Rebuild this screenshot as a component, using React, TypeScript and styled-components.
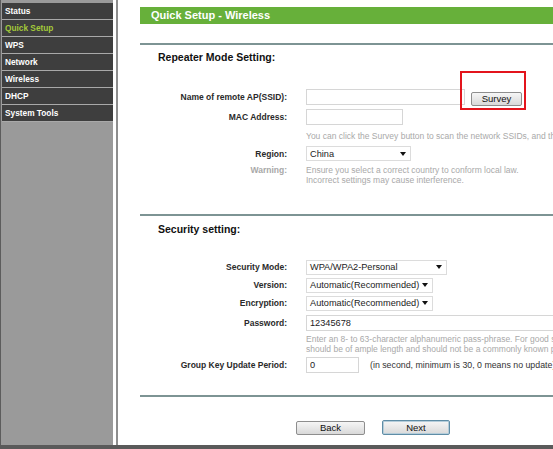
import React from 'react';
import styled, { createGlobalStyle } from 'styled-components';

const Global = createGlobalStyle`
  html, body { margin: 0; padding: 0; overflow: hidden; background: #fff; }
  body { font-family: "Liberation Sans", Arial, sans-serif; }
  * { box-sizing: border-box; }
`;

const Page = styled.div`
  display: flex;
  width: 553px;
  height: 449px;
  border-bottom: 4px solid #5a5a5a;
  overflow: hidden;
  background: #fff;
`;

const Sidebar = styled.nav`
  width: 113px;
  flex-shrink: 0;
  background: #9a9a9a;
  border-left: 1px solid #5c5c5c;
  padding: 3px 0 0 1px;
`;

const MenuItem = styled.div<{ $active?: boolean }>`
  height: 17px;
  line-height: 16px;
  background: #3e3e3e;
  border-bottom: 1px solid #a9a9a9;
  padding-left: 3px;
  font-size: 8.3px;
  font-weight: bold;
  color: ${(p) => (p.$active ? '#a3c93a' : '#ffffff')};
  white-space: nowrap;
`;

const Gutter = styled.div`
  width: 5px;
  flex-shrink: 0;
  border-left: 3px solid #ffffff;
  background: #8e8e8e;
`;

const Content = styled.main`
  flex: 1;
  min-width: 0;
  padding-left: 22px;
  overflow: hidden;
  white-space: nowrap;
  color: #333;
`;

const TitleBar = styled.div`
  margin-top: 7px;
  height: 17px;
  line-height: 17px;
  background: #67b03a;
  color: #fff;
  font-size: 11px;
  font-weight: bold;
  padding-left: 11px;
`;

const Divider = styled.div<{ $mt: number }>`
  margin-top: ${(p) => p.$mt}px;
  height: 2px;
  background: #7d9494;
`;

const SectionTitle = styled.div<{ $mt: number }>`
  margin-top: ${(p) => p.$mt}px;
  padding-left: 18px;
  font-size: 10.5px;
  line-height: 13px;
  font-weight: bold;
  color: #111;
`;

const Form = styled.div<{ $mt: number }>`
  margin-top: ${(p) => p.$mt}px;
  display: flex;
  flex-direction: column;
`;

const Row = styled.div<{ $h: number; $mt?: number; $top?: boolean }>`
  display: grid;
  grid-template-columns: 147px 1fr;
  column-gap: 19px;
  height: ${(p) => p.$h}px;
  margin-top: ${(p) => p.$mt ?? 0}px;
  align-items: ${(p) => (p.$top ? 'start' : 'center')};
  padding-top: ${(p) => (p.$top ? 3 : 0)}px;
`;

const Label = styled.div<{ $muted?: boolean }>`
  text-align: right;
  font-size: 8.5px;
  line-height: 10px;
  font-weight: bold;
  color: ${(p) => (p.$muted ? '#a8a8a8' : '#2a2a2a')};
`;

const Value = styled.div`
  display: flex;
  align-items: center;
  min-width: 0;
`;

const Input = styled.input<{ $w: number }>`
  width: ${(p) => p.$w}px;
  height: 16px;
  border: 1px solid #d6d6d6;
  background: #fff;
  padding: 0 3px;
  font-family: "Liberation Sans", Arial, sans-serif;
  font-size: 9.2px;
  color: #222;
  outline: none;
  flex-shrink: 0;
`;

const Select = styled.div<{ $w: number }>`
  width: ${(p) => p.$w}px;
  height: 15px;
  border: 1px solid #dcdcdc;
  background: #fff;
  display: flex;
  align-items: center;
  justify-content: space-between;
  padding: 0 4px 0 3px;
  font-size: 9.2px;
  color: #222;
`;

const Help = styled.div<{ $lh?: number }>`
  font-size: 8.5px;
  line-height: ${(p) => p.$lh ?? 9.5}px;
  color: #a9a9a9;
`;

const Note = styled.span`
  margin-left: 11px;
  font-size: 8.8px;
  color: #333;
`;

const SurveyWrap = styled.div`
  position: relative;
  margin-left: 6px;
`;

const Button = styled.button<{ $w: number; $primary?: boolean }>`
  width: ${(p) => p.$w}px;
  height: ${(p) => (p.$primary ? 15 : 14)}px;
  padding: 0;
  border: 1px solid ${(p) => (p.$primary ? '#5f8da6' : '#8e8e8e')};
  box-shadow: ${(p) => (p.$primary ? 'inset 0 0 0 1px #b5cdda' : 'none')};
  border-radius: 2px;
  background: linear-gradient(#f6f6f6, #d9d9d9);
  font-family: "Liberation Sans", Arial, sans-serif;
  font-size: 9.5px;
  color: #111;
  line-height: 1;
`;

const Highlight = styled.div`
  position: absolute;
  left: -11px;
  top: -17px;
  width: 66px;
  height: 39px;
  border: 2px solid #e3141c;
  pointer-events: none;
`;

const Actions = styled.div`
  margin-top: 23px;
  padding-left: 156px;
  display: flex;
  gap: 17px;
  align-items: center;
`;

const Arrow = () => (
  <svg width="6" height="4" viewBox="0 0 6 4">
    <path d="M0 0 L6 0 L3 4 Z" fill="#111" />
  </svg>
);

const menu = ['Status', 'Quick Setup', 'WPS', 'Network', 'Wireless', 'DHCP', 'System Tools'];

export default function App() {
  return (
    <>
      <Global />
      <Page>
        <Sidebar>
          {menu.map((m) => (
            <MenuItem key={m} $active={m === 'Quick Setup'}>
              {m}
            </MenuItem>
          ))}
        </Sidebar>
        <Gutter />
        <Content>
          <TitleBar>Quick Setup - Wireless</TitleBar>
          <Divider $mt={19} />
          <SectionTitle $mt={6}>Repeater Mode Setting:</SectionTitle>
          <Form $mt={23}>
            <Row $h={20}>
              <Label>Name of remote AP(SSID):</Label>
              <Value>
                <Input $w={159} readOnly defaultValue="" />
                <SurveyWrap>
                  <Button $w={51}>Survey</Button>
                  <Highlight />
                </SurveyWrap>
              </Value>
            </Row>
            <Row $h={20}>
              <Label>MAC Address:</Label>
              <Value>
                <Input $w={97} readOnly defaultValue="" />
              </Value>
            </Row>
            <Row $h={19}>
              <span />
              <Help>You can click the Survey button to scan the network SSIDs, and then select one.</Help>
            </Row>
            <Row $h={15}>
              <Label>Region:</Label>
              <Value>
                <Select $w={105}>
                  China
                  <Arrow />
                </Select>
              </Value>
            </Row>
            <Row $h={20} $mt={1} $top>
              <Label $muted>Warning:</Label>
              <Help $lh={10}>
                Ensure you select a correct country to conform local law.
                <br />
                Incorrect settings may cause interference.
              </Help>
            </Row>
          </Form>
          <Divider $mt={32} />
          <SectionTitle $mt={7}>Security setting:</SectionTitle>
          <Form $mt={22}>
            <Row $h={18}>
              <Label>Security Mode:</Label>
              <Value>
                <Select $w={141}>
                  WPA/WPA2-Personal
                  <Arrow />
                </Select>
              </Value>
            </Row>
            <Row $h={18}>
              <Label>Version:</Label>
              <Value>
                <Select $w={127}>
                  Automatic(Recommended)
                  <Arrow />
                </Select>
              </Value>
            </Row>
            <Row $h={18}>
              <Label>Encryption:</Label>
              <Value>
                <Select $w={127}>
                  Automatic(Recommended)
                  <Arrow />
                </Select>
              </Value>
            </Row>
            <Row $h={18} $mt={2}>
              <Label>Password:</Label>
              <Value>
                <Input $w={300} readOnly defaultValue="12345678" />
              </Value>
            </Row>
            <Row $h={24} $top>
              <span />
              <Help>
                Enter an 8- to 63-character alphanumeric pass-phrase. For good security, it
                <br />
                should be of ample length and should not be a commonly known phrase.
              </Help>
            </Row>
            <Row $h={18}>
              <Label>Group Key Update Period:</Label>
              <Value>
                <Input $w={53} readOnly defaultValue="0" />
                <Note>(in second, minimum is 30, 0 means no update)</Note>
              </Value>
            </Row>
          </Form>
          <Divider $mt={21} />
          <Actions>
            <Button $w={69}>Back</Button>
            <Button $w={68} $primary>
              Next
            </Button>
          </Actions>
        </Content>
      </Page>
    </>
  );
}
